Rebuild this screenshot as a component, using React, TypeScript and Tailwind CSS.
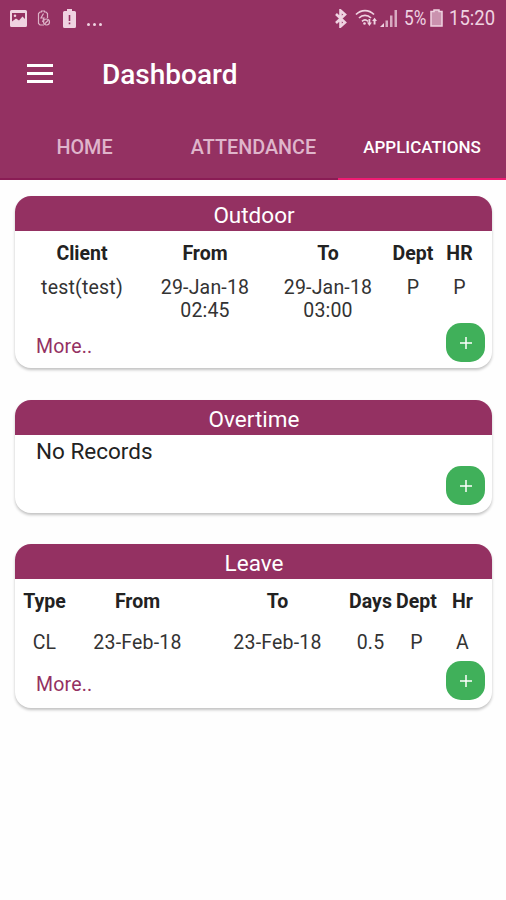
import type { ReactNode } from 'react';

const TABS = [
    { label: 'HOME', active: false },
    { label: 'ATTENDANCE', active: false },
    { label: 'APPLICATIONS', active: true },
];

const OUTDOOR = {
    head: ['Client', 'From', 'To', 'Dept', 'HR'],
    row: ['test(test)', '29-Jan-18 02:45', '29-Jan-18 03:00', 'P', 'P'],
};

const LEAVE = {
    head: ['Type', 'From', 'To', 'Days', 'Dept', 'Hr'],
    row: ['CL', '23-Feb-18', '23-Feb-18', '0.5', 'P', 'A'],
};

function StatusBar() {
    return (
        <div className="flex h-9 items-center justify-between pl-[10px] pr-[11px] text-[#efd3e1]">
            <div className="flex items-center">
                {/* Picture notification */}
                <svg width="17" height="17" viewBox="0 0 17 17">
                    <path fill="currentColor" fillRule="evenodd" d="M1.5 0h14A1.5 1.5 0 0 1 17 1.5v14a1.5 1.5 0 0 1-1.5 1.5h-14A1.5 1.5 0 0 1 0 15.5v-14A1.5 1.5 0 0 1 1.5 0zM2 3v8.5l4-3 3 2L12.5 6.500 15 9V3zM5 4.500a1.300 1.300 0 1 1 0 2.600 1.300 1.300 0 0 1 0-2.600z" />
                </svg>
                {/* Battery saver */}
                <svg className="ml-[10px] opacity-80" width="14" height="17" viewBox="0 0 14 17" fill="none" stroke="currentColor" strokeWidth="1.2">
                    <path d="M10.5 8V3.5L9 2H7.5V1h-3v1H3L1.5 3.5v10L3 15h4" />
                    <path d="M6.5 3.5 4 8h3l-1.500 4" />
                    <circle cx="9.5" cy="12" r="3" />
                    <path d="m7.5 14 4-4" />
                </svg>
                {/* Low battery */}
                <svg className="ml-[12px]" width="13" height="19" viewBox="0 0 13 19">
                    <path fill="currentColor" d="M4 0h5v2h2.5A1.5 1.5 0 0 1 13 3.5v14a1.5 1.5 0 0 1-1.5 1.5h-10A1.5 1.5 0 0 1 0 17.5v-14A1.5 1.5 0 0 1 1.5 2H4z" />
                    <path fill="#943162" d="M5.700 6h1.600v6H5.700zM5.700 13.500h1.600v1.800H5.700z" />
                </svg>
                <div className="ml-[11px] mt-[12px] flex gap-[3px]">
                    <span className="size-[3px] rounded-full bg-current" />
                    <span className="size-[3px] rounded-full bg-current" />
                    <span className="size-[3px] rounded-full bg-current" />
                </div>
            </div>

            <div className="flex items-center">
                {/* Bluetooth */}
                <svg width="12" height="19" viewBox="0 0 12 19" fill="none" stroke="currentColor" strokeWidth="2.6">
                    <path d="m1 5 9 8.500-4.500 4V1.500L10 5.500 1 14" />
                </svg>
                {/* Wifi with transfer arrows */}
                <svg className="ml-[8px]" width="23" height="18" viewBox="0 0 23 18" fill="none" stroke="currentColor" strokeWidth="1.7">
                    <path d="M1 5.500C6 .200 14 .200 19 5.500" />
                    <path d="M4 9c3.500-3.600 8.500-3.600 12 0" />
                    <path d="M7 12.300c2-1.800 4-1.800 6 0" />
                    <circle cx="9.5" cy="14.5" r="1.3" fill="currentColor" stroke="none" />
                    <path fill="currentColor" stroke="none" d="M13.500 10h1.800v3.500h1.600L14.400 17l-2.400-3.500h1.500zM18.600 15.500V12h-1.500l2.500-3.200L22 12h-1.500v3.500z" />
                </svg>
                {/* Signal strength */}
                <svg className="ml-[2px]" width="18" height="17" viewBox="0 0 18 17" fill="currentColor">
                    <path d="M0 17l4-4v4z" />
                    <path d="M5.500 10.500H8V17H5.500z" opacity=".75" />
                    <path d="M10 5.500h2.500V17H10z" opacity=".75" />
                    <path d="M14.500 0H17v17h-2.500z" opacity=".75" />
                </svg>
                <span className="ml-[6px] w-[24px] origin-left scale-x-[0.82] whitespace-nowrap text-[21px] leading-none">5%</span>
                {/* Empty battery */}
                <svg className="ml-[2px]" width="13" height="18" viewBox="0 0 13 18">
                    <path d="M4 1h5v1.500h3V17H1V2.500h3z" fill="currentColor" fillOpacity=".6" stroke="currentColor" strokeWidth="1.5" />
                </svg>
                <span className="ml-[6px] w-[46px] origin-left scale-x-[0.88] whitespace-nowrap text-[21px] leading-none">15:20</span>
            </div>
        </div>
    );
}

function AddButton() {
    return (
        <button className="flex size-[39px] items-center justify-center rounded-[15px] bg-[#40b05a] text-white">
            <svg width="12" height="12" viewBox="0 0 12 12" stroke="currentColor" strokeWidth="1.5">
                <path d="M6 0v12M0 6h12" />
            </svg>
        </button>
    );
}

function Card({ title, className, children }: { title: string; className: string; children: ReactNode }) {
    return (
        <section className={`flex flex-col overflow-hidden rounded-[16px] bg-white shadow-[0_2px_3px_rgba(0,0,0,0.24)] ${className}`}>
            <h2 className="h-[35px] shrink-0 bg-[#943162] pl-px text-center text-[22.5px] leading-[38px] text-white">{title}</h2>
            {children}
        </section>
    );
}

function CardFooter({ more }: { more?: boolean }) {
    return (
        <div className="mt-auto flex justify-between pl-[21px] pr-[7px]">
            <a className="pt-[12px] text-[19.5px] leading-[24px] tracking-[0.2px] text-[#943162]">{more ? 'More..' : ''}</a>
            <AddButton />
        </div>
    );
}

export default function App() {
    return (
        <div className="h-[900px] w-[506px] overflow-hidden bg-[#fefefe] font-[Roboto,sans-serif] text-[#222]">
            <header className="flex h-[180px] flex-col bg-[#943162]">
                <StatusBar />
                <div className="flex h-[75px] items-center">
                    <button className="ml-[27px] flex w-[26px] flex-col gap-[5px]">
                        <span className="h-[3px] bg-white" />
                        <span className="h-[3px] bg-white" />
                        <span className="h-[3px] bg-white" />
                    </button>
                    <h1 className="ml-[49px] mt-[3px] text-[28px] font-medium leading-none text-white">Dashboard</h1>
                </div>
                <nav className="grid flex-1 grid-cols-[169px_169px_168px]">
                    {TABS.map((tab) => (
                        <button
                            key={tab.label}
                            className={`border-b-2 pt-[7px] font-medium ${tab.active
                                ? 'border-[#f01c73] text-[17px] text-white'
                                : 'border-[#8a1c55] text-[19.8px] text-[#dfb5cb]'
                                }`}
                        >
                            {tab.label}
                        </button>
                    ))}
                </nav>
            </header>

            <main className="flex flex-col pl-[15px] pr-[14px] pt-[16px]">
                <Card title="Outdoor" className="h-[172px] pb-[6px]">
                    <div className="grid grid-cols-[123px_123px_123px_47px_46px] pl-[5.5px] pt-[11px] text-center text-[19.5px] leading-[24px]">
                        {OUTDOOR.head.map((h) => (
                            <div key={h} className="font-bold">{h}</div>
                        ))}
                        {OUTDOOR.row.map((cell, i) => (
                            <div key={i} className="pt-[10px] leading-[23px] tracking-[0.2px] text-[#333]">
                                {cell.split(' ').map((line) => (
                                    <span key={line} className="block">{line}</span>
                                ))}
                            </div>
                        ))}
                    </div>
                    <CardFooter more />
                </Card>

                <Card title="Overtime" className="mt-[32px] h-[113px] pb-[8px]">
                    <p className="pl-[21px] pt-[3px] text-[22.5px] leading-[27px]">No Records</p>
                    <CardFooter />
                </Card>

                <Card title="Leave" className="mt-[31px] h-[164px] pb-[8px]">
                    <div className="grid grid-cols-[46px_140px_140px_46px_46px_46px] pl-[6.5px] pt-[11px] text-center text-[19.5px] leading-[24px]">
                        {LEAVE.head.map((h) => (
                            <div key={h} className="font-bold">{h}</div>
                        ))}
                        {LEAVE.row.map((cell, i) => (
                            <div key={i} className="pt-[17px] tracking-[0.2px] text-[#333]">{cell}</div>
                        ))}
                    </div>
                    <CardFooter more />
                </Card>
            </main>
        </div>
    );
}
